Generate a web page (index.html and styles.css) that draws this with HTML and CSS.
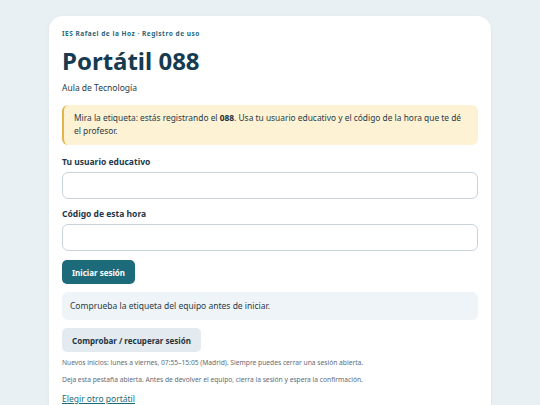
FILE: index.html
```html
<!DOCTYPE html>
<html lang="es">
<head>
<meta charset="utf-8">
<title>Portátil 088</title>
<link rel="stylesheet" href="styles.css">
</head>
<body>
<main class="card">
  <p class="kicker">IES Rafael de la Hoz · Registro de uso</p>
  <h1 class="title">Portátil 088</h1>
  <p class="subtitle">Aula de Tecnología</p>
  <div class="notice">Mira la etiqueta: estás registrando el <strong>088</strong>. Usa tu usuario educativo y el código de la hora que te dé el profesor.</div>
  <form class="form">
    <label class="field">
      <span class="label">Tu usuario educativo</span>
      <input class="input" type="text">
    </label>
    <label class="field">
      <span class="label">Código de esta hora</span>
      <input class="input" type="text">
    </label>
    <div class="actions">
      <button class="btn btn-primary" type="button">Iniciar sesión</button>
    </div>
  </form>
  <div class="status">Comprueba la etiqueta del equipo antes de iniciar.</div>
  <div class="actions">
    <button class="btn btn-secondary" type="button">Comprobar / recuperar sesión</button>
  </div>
  <p class="small">Nuevos inicios: lunes a viernes, 07:55–15:05 (Madrid). Siempre puedes cerrar una sesión abierta.</p>
  <p class="small">Deja esta pestaña abierta. Antes de devolver el equipo, cierra la sesión y espera la confirmación.</p>
  <a class="link" href="#">Elegir otro portátil</a>
</main>
</body>
</html>
```

FILE: styles.css
```css
* { box-sizing: border-box; }
html, body { margin: 0; padding: 0; }
body {
  background: #e9f0f3;
  font-family: "Noto Sans", "Open Sans", sans-serif;
  color: #1f3442;
  padding: 16px 0 0;
}
.card {
  width: 442px;
  margin: 0 auto;
  background: #ffffff;
  border-radius: 14px;
  padding: 13px 13px 20px;
  box-shadow: 0 1px 4px rgba(30, 60, 80, 0.06);
}
.kicker {
  margin: 0;
  font-size: 6.5px;
  font-weight: 700;
  letter-spacing: 0.08em;
  color: #2a6678;
  line-height: 9px;
}
.title {
  margin: 7px 0 0;
  font-size: 24px;
  line-height: 31px;
  font-weight: 700;
  color: #163a4f;
}
.subtitle {
  margin: 6px 0 0;
  font-size: 8.5px;
  line-height: 12px;
  color: #2a3b47;
}
.notice {
  margin-top: 11px;
  background: #fdf2d4;
  border-left: 2px solid #e3b54a;
  border-radius: 6px;
  padding: 7px 10px 8px;
  font-size: 8.4px;
  line-height: 12.5px;
  color: #2a3b47;
}
.notice strong { font-weight: 700; color: #1b2d3a; }
.form { margin: 11px 0 0; }
.field { display: flex; flex-direction: column; margin-bottom: 9px; }
.label {
  font-size: 8.5px;
  font-weight: 700;
  line-height: 12px;
  color: #23384a;
  margin-bottom: 4px;
}
.input {
  height: 27px;
  border: 1px solid #c8d4dc;
  border-radius: 6px;
  background: #fff;
  font: inherit;
}
.actions { display: flex; }
.btn {
  font-family: inherit;
  font-size: 8px;
  font-weight: 700;
  border: 0;
  border-radius: 5px;
  height: 24px;
  padding: 0 10px;
}
.btn-primary { background: #1d6a7a; color: #ffffff; }
.btn-secondary { background: #e4ebf0; color: #1f3442; }
.status {
  margin: 8px 0 8px;
  background: #eff4f8;
  border-radius: 6px;
  padding: 8px 8px;
  font-size: 8.5px;
  line-height: 12px;
  color: #2a3b47;
}
.small {
  margin: 6px 0 0;
  font-size: 6.7px;
  line-height: 10px;
  color: #5e6c77;
}
.small + .small { margin-top: 7px; }
.link {
  display: inline-block;
  margin-top: 5px;
  font-size: 8.5px;
  line-height: 12px;
  color: #1d6a7a;
  text-decoration: underline;
}
```
